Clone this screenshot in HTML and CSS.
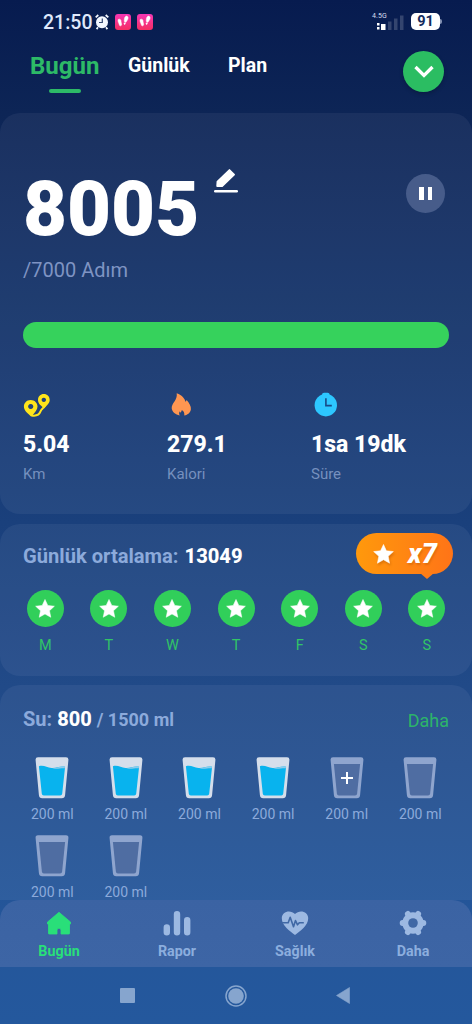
FILE: index.html
```html
<!DOCTYPE html>
<html lang="tr">
<head>
<meta charset="utf-8">
<title>Adım Sayar</title>
<link rel="stylesheet" href="styles.css">
</head>
<body>
<svg class="defs" width="0" height="0" aria-hidden="true">
  <defs>
    <linearGradient id="pink" x1="0" y1="0" x2="0" y2="1"><stop offset="0" stop-color="#f637b4"/><stop offset="1" stop-color="#f52f62"/></linearGradient>
    <symbol id="star" viewBox="0 0 20 19"><path d="M10 .4l2.8 6 6.6.8-4.9 4.5 1.3 6.6-5.8-3.3-5.8 3.3 1.3-6.6L.6 7.200l6.600-.8z" fill="#fff" stroke="#fff" stroke-width=".5" stroke-linejoin="round"/></symbol>
    <symbol id="steps" viewBox="0 0 16 16"><rect width="16" height="16" rx="3" fill="url(#pink)"/><path d="M3.200 5.500c1.800-1 3 .2 2.900 2.300-.1 1.200.8 1.700.5 3-.3 1.400-1.900 1.400-2.200.1-.3-1.300-2-3.700-1.200-5.400zM12.800 2.800c.9 1.400-.2 3-1.200 4.500l-.8 1.200-1.500-.9c-.1-2 .1-4.500 1.300-5.200.8-.5 1.700-.3 2.200.4zM9.100 8.700l1.400.8c-.4 1.500-2 1.300-1.400-.8z" fill="#fff" stroke="#fff" stroke-width=".5"/></symbol>
    <symbol id="full" viewBox="0 0 34 42"><path d="M3 .2h28q2.700 0 2.400 2.800l-3.300 35q-.3 3.300-3.300 3.300H7.200q-3 0-3.300-3.300L.6 3Q.3.200 3 .2z" fill="#d5deeb"/><path d="M3.900 9.200c5-1.400 8 1.500 12.600 1.800 5 .4 8-2.200 13.600-1.300l-2.900 27q-.2 1.800-2 1.800H8.800q-1.800 0-2-1.800z" fill="#08b3ee"/><path d="M17 11.200c5 .3 8-2.300 13-1.500l-.2 1.500c-4-.4-8 1.500-12.800 0z" fill="#8ccbea"/></symbol>
    <symbol id="empty" viewBox="0 0 34 42"><path d="M3 .2h28q2.700 0 2.400 2.800l-3.300 35q-.3 3.300-3.300 3.300H7.200q-3 0-3.300-3.300L.6 3Q.3.200 3 .2z" fill="#8fa5ce"/><path d="M3.900 7h26.200l-3 29.700q-.2 1.800-2 1.800H8.900q-1.800 0-2-1.800z" fill="#4f6da2"/></symbol>
  </defs>
</svg>
<div class="screen">
  <header class="status">
    <span class="time">21:50</span>
    <svg class="alarm" width="14" height="16" viewBox="0 0 14 16"><circle cx="7" cy="8.300" r="6" fill="#f3f7ff"/><path d="M.7 3.300L3.300 1M13.300 3.300L10.700 1M3 13.300l-1.400 1.800M11 13.300l1.400 1.800" stroke="#f3f7ff" stroke-width="1.800"/><path d="M7.300 4.500v4H4" stroke="#334772" stroke-width="1.200" fill="none"/></svg>
    <svg class="app" width="16" height="16"><use href="#steps"/></svg>
    <svg class="app next" width="16" height="16"><use href="#steps"/></svg>
    <div class="signal">
      <span class="net">4.5G</span>
      <svg width="28" height="15" viewBox="0 0 28 15"><path d="M1 8h2.500v2.500H1zM1 12h2.500v2.500H1zM5 9h4.500v6H5z" fill="#fff"/><path d="M12 6.500h3.500V15H12zM18 3.500h3.500V15H18zM24 .5h3.500V15H24z" fill="#34456f"/></svg>
    </div>
    <span class="battery">91</span><i class="tip"></i>
  </header>
  <nav class="tabs">
    <a class="tab active">Bugün</a><a class="tab second">Günlük</a><a class="tab third">Plan</a>
    <span class="drop"><svg width="20" height="13" viewBox="0 0 20 13"><path d="M1.500 2l8.500 8.500L18.500 2" fill="none" stroke="#fff" stroke-width="3.300"/></svg></span>
  </nav>

  <section class="card summary">
    <div class="count-row">
      <strong class="count">8005</strong>
      <svg class="edit" width="24" height="24" viewBox="0 0 24 24"><path d="M2.600 12.200L14.800.400q.7-.6 1.300 0l4.600 4.600q.6.6 0 1.200L8.500 18H3.200q-.9 0-.9-.9z" fill="#fff"/><path d="M1.200 22.200h21.600" stroke="#fff" stroke-width="2.400" stroke-linecap="round"/></svg>
      <span class="pause"><i></i><i></i></span>
    </div>
    <div class="goal">/7000 Adım</div>
    <div class="progress"></div>
    <div class="stats">
      <div class="stat">
        <svg width="28" height="26" viewBox="0 0 28 26"><path fill-rule="evenodd" d="M7.700 7.900c4 0 6.800 2.900 6.800 6.600 0 3.300-2.500 5.700-5.300 9.200-.6.700-1.400.7-2 0C4 20.700.9 18.300.9 14.500c0-3.700 2.800-6.600 6.800-6.600zM7.700 11.900a2.600 2.600 0 1 0 .01 0zM20.800 2.100c3.500 0 5.900 2.600 5.900 5.800 0 3.400-2.900 5.300-5.500 8.400-3-2.600-6.200-4.600-6.200-8.400 0-3.200 2.400-5.800 5.800-5.800zM20.800 5.700a2.200 2.200 0 1 0 .01 0z" fill="#ffe51b"/><path d="M8.500 23.400c5.500 1 8-1.200 9-4 .8-2.300 2.500-2.700 4.500-5.500" fill="none" stroke="#ffe51b" stroke-width="2"/></svg>
        <strong>5.04</strong><span>Km</span>
      </div>
      <div class="stat">
        <svg width="28" height="26" viewBox="0 0 28 26"><path d="M9.700 1.200c5.600 2 8.400 5.800 8.700 8.600.7-.4 1-1 1.200-1.800 2.700 3 4.600 6.500 4.300 9.200-.4 3.500-3 5.400-6.600 6.400.3-2.800-.6-4.600-2.500-5.600-.2 1.600-.9 2-1.600 2.800-.3-.8-.3-1.500-.3-1.500-1 1.200-1 2.700-.2 4.100C8.600 22.600 5 20 4.700 16.300 4.400 11 10.800 8.300 9.700 1.200z" fill="#ff9651"/></svg>
        <strong>279.1</strong><span>Kalori</span>
      </div>
      <div class="stat">
        <svg width="28" height="26" viewBox="0 0 28 26"><rect x="11" y=".8" width="7.600" height="5" rx="2" fill="#2dc7ff"/><circle cx="14.800" cy="13.200" r="11.200" fill="#2dc7ff"/><path d="M14.900 6.200V13.600H20.800" stroke="#184a86" stroke-width="1.600" fill="none"/></svg>
        <strong>1sa 19dk</strong><span>Süre</span>
      </div>
    </div>
  </section>

  <section class="card week">
    <h2>Günlük ortalama: <b>13049</b></h2>
    <div class="badge"><svg class="bstar" width="21" height="20"><use href="#star"/></svg><em>x7</em></div>
    <div class="days">
      <div><i><svg width="20" height="19"><use href="#star"/></svg></i>M</div>
      <div><i><svg width="20" height="19"><use href="#star"/></svg></i>T</div>
      <div><i><svg width="20" height="19"><use href="#star"/></svg></i>W</div>
      <div><i><svg width="20" height="19"><use href="#star"/></svg></i>T</div>
      <div><i><svg width="20" height="19"><use href="#star"/></svg></i>F</div>
      <div><i><svg width="20" height="19"><use href="#star"/></svg></i>S</div>
      <div><i><svg width="20" height="19"><use href="#star"/></svg></i>S</div>
    </div>
  </section>

  <section class="card water">
    <div class="water-head"><h2>Su: <b>800</b> <small>/ 1500 ml</small></h2><a>Daha</a></div>
    <div class="glasses">
      <div><svg width="34" height="42"><use href="#full"/></svg>200 ml</div>
      <div><svg width="34" height="42"><use href="#full"/></svg>200 ml</div>
      <div><svg width="34" height="42"><use href="#full"/></svg>200 ml</div>
      <div><svg width="34" height="42"><use href="#full"/></svg>200 ml</div>
      <div><svg width="34" height="42"><use href="#empty"/><path d="M11 21h12M17 15v12" stroke="#fff" stroke-width="2"/></svg>200 ml</div>
      <div><svg width="34" height="42"><use href="#empty"/></svg>200 ml</div>
      <div><svg width="34" height="42"><use href="#empty"/></svg>200 ml</div>
      <div><svg width="34" height="42"><use href="#empty"/></svg>200 ml</div>
    </div>
  </section>

  <nav class="bottom">
    <a class="on"><svg width="28" height="26" viewBox="0 0 28 26"><path d="M14 2.300L25.500 12v2h-1v9.500q0 .5-.7.500H16v-4q0-1.800-2-1.800t-2 1.800v4H4.200q-.7 0-.7-.5V14h-1v-2z" fill="#29df79" stroke="#29df79" stroke-width=".8" stroke-linejoin="round"/></svg>Bugün</a>
    <a><svg width="28" height="26" viewBox="0 0 28 26"><path d="M3.800 17.500v4.800M14 4.300v18M24.200 10.300v12" stroke="#9db9e2" stroke-width="6.400" stroke-linecap="round"/></svg>Rapor</a>
    <a><svg width="28" height="26" viewBox="0 0 28 26"><path d="M14 24.900C9 21.500.8 15.500.8 8.300.8 1.200 9.500-.8 14 4 18.500-.8 27.200 1.200 27.200 8.300 27.200 15.500 19 21.500 14 24.900z" fill="#9db9e2"/><path d="M1 12.700h6.200l2-5.500 3.300 9.500 2-6.200 2 4.300 1.800-2.100h4.500" fill="none" stroke="#4068a5" stroke-width="1.600" stroke-linejoin="round"/></svg>Sağlık</a>
    <a><svg width="28" height="26" viewBox="0 0 28 26"><path d="M3.600 13h20.800M8.800 3.900l10.400 18.200M19.200 3.900L8.800 22.100" stroke="#9db9e2" stroke-width="5.800" stroke-linecap="round"/><circle cx="14" cy="13" r="10.700" fill="#9db9e2"/><circle cx="14" cy="13" r="4.800" fill="#4068a5"/></svg>Daha</a>
  </nav>
  <footer class="system">
    <svg width="15" height="15"><rect width="15" height="15" rx="1" fill="#86a5ce"/></svg>
    <svg width="24" height="24"><circle cx="12" cy="12" r="10" fill="none" stroke="#86a5ce" stroke-width="1.500"/><circle cx="12" cy="12" r="7.800" fill="#86a5ce"/></svg>
    <svg width="14" height="17"><path d="M13.500.5v16L.5 8.500z" fill="#86a5ce" stroke="#86a5ce" stroke-width=".6" stroke-linejoin="round"/></svg>
  </footer>
</div>
</body>
</html>
```
FILE: styles.css
```css
* { box-sizing: border-box; }
body { margin: 0; font-family: Roboto, "Noto Sans", sans-serif; }
h2 { margin: 0; }
i { font-style: normal; }
svg { display: block; flex: none; }
.defs { position: absolute; }
.screen {
  width: 472px; height: 1024px; overflow: hidden;
  display: flex; flex-direction: column;
  background: linear-gradient(180deg, #071b4f 0%, #0d2556 11%, #1a407c 51%, #214a88 67%, #24569a 90%, #24589d 100%);
}

.status { height: 43px; flex: none; display: flex; align-items: center; padding: 0 30px 0 43px; }
.time { font-size: 19.5px; line-height: 24px; font-weight: 500; color: #dfe8fb; width: 51px; margin-top: 3px; }
.alarm { margin-left: 1px; }
.app { margin-left: 6px; }
.app.next { margin-left: 6px; }
.signal { margin-left: auto; width: 32px; height: 17px; position: relative; display: flex; justify-content: flex-end; align-items: flex-end; }
.net { position: absolute; left: 0; top: 0; font-size: 7px; line-height: 7px; color: #d7def0; letter-spacing: .1px; }
.battery { margin-left: 7px; width: 29px; height: 17px; border-radius: 5px; background: #fff; color: #132b5d; font: bold 14.500px/18px Roboto, sans-serif; text-align: center; }
.tip { width: 2px; height: 5px; border-radius: 0 2px 2px 0; background: #8492b3; }

.tabs { height: 70px; flex: none; display: flex; align-items: flex-start; padding: 0 28px 0 30px; color: #fff; }
.tab { font-size: 19.500px; line-height: 24px; font-weight: 700; margin-top: 11px; }
.tab.active { font-size: 24px; line-height: 28px; color: #2dba67; margin-top: 9px; width: 69px; }
.tab.active::after { content: ""; display: block; width: 32px; height: 4px; border-radius: 2px; background: #2dba67; margin: 9px auto 0; }
.second { margin-left: 29px; width: 62px; }
.third { margin-left: 38px; }
.drop { margin: 8px 0 0 auto; width: 41px; height: 41px; border-radius: 50%; background: #2bbd62; display: grid; place-items: center; box-shadow: 0 2px 4px #0003; }

.card { flex: none; border-radius: 20px; background: #e6ecff0f; position: relative; }
.summary { height: 401px; padding: 0 23px; }
.count-row { display: flex; align-items: flex-start; padding-top: 50px; height: 140px; color: #fff; }
.count { font-size: 76px; line-height: 90px; font-weight: 900; width: 177px; margin-top: 1px; }
.edit { margin: 6px 0 0 14px; }
.pause { margin: 11px 4px 0 auto; width: 39px; height: 39px; border-radius: 50%; background: #475c8a; display: flex; align-items: center; justify-content: center; gap: 4px; }
.pause i { width: 4.500px; height: 13px; background: #fff; }
.goal { font-size: 20px; line-height: 24px; height: 24px; margin-top: 5px; color: #7f94c3; }
.progress { height: 26px; margin-top: 40px; border-radius: 13px; background: #36d25c; }
.stats { display: grid; grid-template-columns: 144px 144px 1fr; margin-top: 44px; }
.stat strong { display: block; font-size: 23px; line-height: 28px; font-weight: 800; color: #fff; margin-top: 13px; }
.stat span { display: block; font-size: 15px; line-height: 20px; margin-top: 5px; color: #7690be; }

.week { height: 152px; margin-top: 10px; padding: 18px 13px 0; }
.week h2, .water h2 { font-size: 19.500px; line-height: 28px; font-weight: 700; color: #8caadb; padding-left: 10px; white-space: nowrap; }
.week h2 { font-size: 20.150px; }
h2 b { color: #fff; font-weight: 800; }
.week b { margin-left: 1px; }
.badge { position: absolute; left: 356px; top: 9px; width: 97px; height: 41px; border-radius: 21px; background: linear-gradient(90deg, #ff990c, #ff7417); display: flex; align-items: center; color: #fff; padding-left: 17px; }
.badge::after { content: ""; position: absolute; left: 64px; top: 40px; border: 7px solid transparent; border-top: 6px solid #ff7d15; border-bottom: 0; }
.bstar { filter: drop-shadow(1px 2px 1px #a84a0066); }
.badge em { font-size: 27px; line-height: 30px; font-weight: 900; margin-left: 14px; letter-spacing: .3px; text-shadow: 1px 2px 2px #a84a0055; }
.days { display: grid; grid-template-columns: repeat(7, 63.600px); margin-top: 20px; padding-left: .5px; }
.days div { display: flex; flex-direction: column; align-items: center; font-size: 14.500px; line-height: 18px; color: #31c566; gap: 10px; }
.days i { width: 37px; height: 37px; border-radius: 50%; background: #31cf5a; display: grid; place-items: center; }

.water { height: 215px; margin-top: 9px; padding: 19px 15px 0; border-radius: 20px 20px 0 0; }
.water-head { display: flex; align-items: flex-start; justify-content: space-between; height: 53px; padding-right: 8px; }
.water h2 { padding-left: 8px; font-size: 20px; margin-top: 1px; }
.water small { font-size: 18px; }
.water-head a { font-size: 18px; line-height: 24px; color: #2cb46a; margin-top: 5px; }
.glasses { display: grid; grid-template-columns: repeat(6, 73.600px); grid-auto-rows: 77.500px; padding-left: .5px; }
.glasses div { display: flex; flex-direction: column; align-items: center; font-size: 14px; line-height: 20px; gap: 5px; color: #8caadb; }

.bottom { height: 67px; flex: none; display: grid; grid-template-columns: repeat(4, 1fr); border-radius: 20px 20px 0 0; background: linear-gradient(#3b63a3, #3d65a5); }
.bottom a { display: flex; flex-direction: column; align-items: center; padding-top: 10px; font-size: 14.300px; font-weight: 700; line-height: 20px; gap: 5px; color: #8caede; }
.bottom .on { color: #29df79; }
.system { height: 57px; flex: none; display: flex; align-items: center; padding: 0 122px 0 120px; justify-content: space-between; }
```
